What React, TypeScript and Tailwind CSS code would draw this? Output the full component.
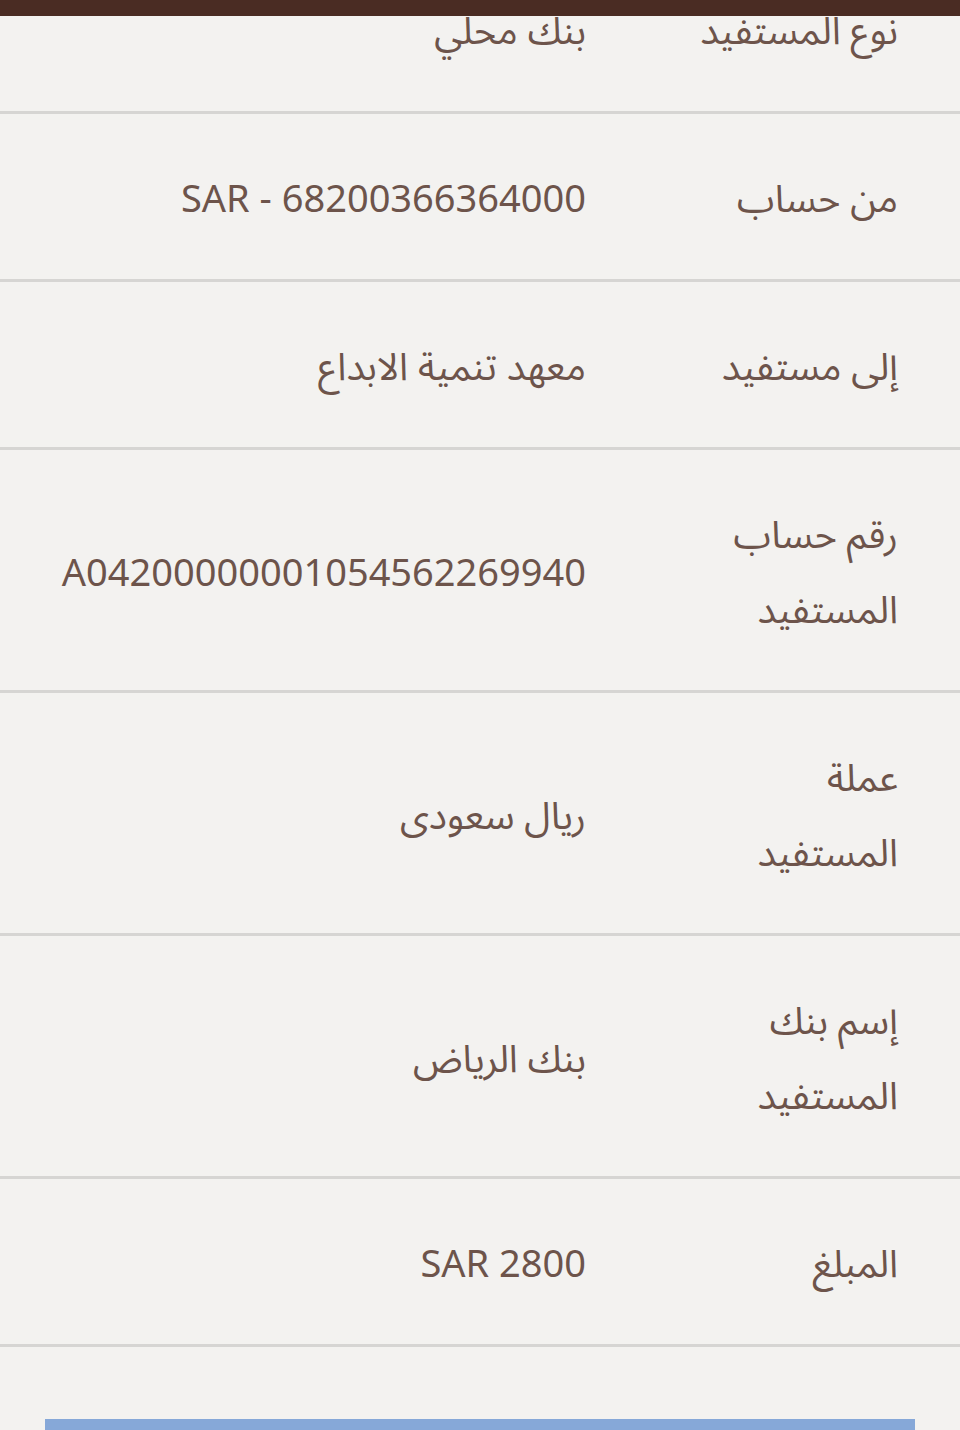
const rows: { label: string; value: string }[] = [
  { label: 'نوع المستفيد', value: 'بنك محلي' },
  { label: 'من حساب', value: 'SAR - 68200366364000' },
  { label: 'إلى مستفيد', value: 'معهد تنمية الابداع' },
  { label: 'رقم حساب المستفيد', value: 'A04200000001054562269940' },
  { label: 'عملة المستفيد', value: 'ريال سعودى' },
  { label: 'إسم بنك المستفيد', value: 'بنك الرياض' },
  { label: 'المبلغ', value: 'SAR 2800' },
];

export default function App() {
  return (
    <div
      dir="rtl"
      className="flex h-[1430px] flex-col overflow-hidden bg-[#f3f2f0] text-[#6d544b]"
      style={{ fontFamily: '"Noto Sans", "Noto Sans Arabic", "DejaVu Sans", sans-serif' }}
    >
      <div className="relative z-10 h-4 shrink-0 bg-[#4a2c23]" />
      <div className="min-h-0 flex-1 overflow-hidden">
        <div className="-mt-[70px]">
          {rows.map((row) => (
            <div
              key={row.label}
              className="flex items-center border-b-[3px] border-[#d6d5d3] pt-[46px] pb-[44px] pr-[62px] text-[38px] leading-[75px]"
            >
              <div className="w-[200px] shrink-0">{row.label}</div>
              <div className="mr-[112px]">
                <span dir="auto">{row.value}</span>
              </div>
            </div>
          ))}
          <div className="mx-[45px] mt-[72px] h-[100px] bg-[#86a8d8]" />
        </div>
      </div>
    </div>
  );
}
